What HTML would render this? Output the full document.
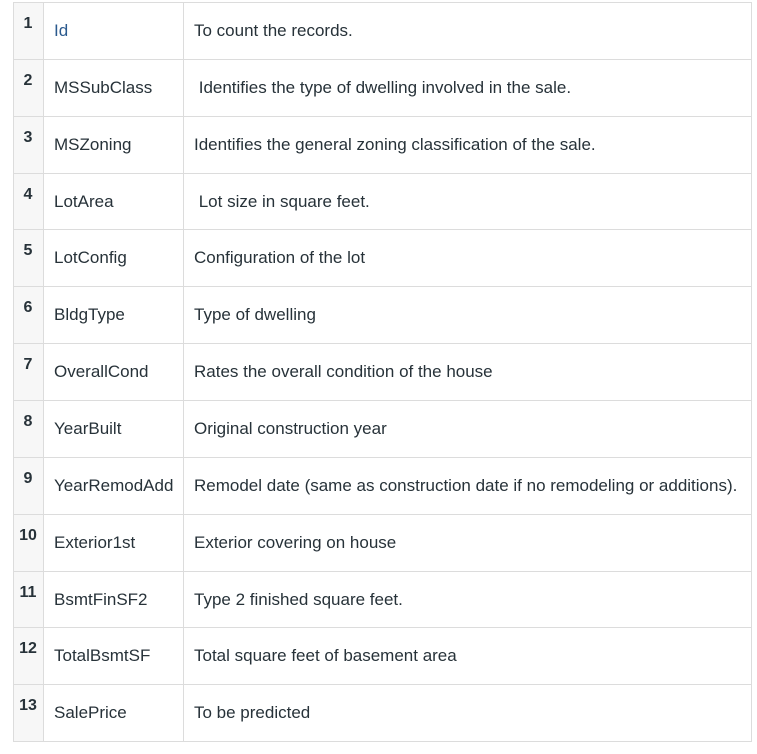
<!DOCTYPE html>
<html><head><meta charset="utf-8"><style>
body{margin:0;background:#fff;width:757px;height:754px;position:relative;font-family:"Liberation Sans",sans-serif;color:#273239;overflow:hidden}
.r{position:absolute;left:13px;width:738px;border-top:1px solid #dcdcdc}
.n{position:absolute;left:13px;width:30px;background:#f7f7f7}
.v{position:absolute;top:2px;width:1px;height:740px;background:#dcdcdc}
.t{position:absolute;font-size:17px;white-space:nowrap;line-height:18px}
.b{position:absolute;font-size:16px;font-weight:bold;line-height:18px;text-align:center;width:30px;left:13px}
</style></head><body>
<div id="g"></div>
<script>
const rows=[["Id","To count the records."],["MSSubClass"," Identifies the type of dwelling involved in the sale."],["MSZoning","Identifies the general zoning classification of the sale."],["LotArea"," Lot size in square feet."],["LotConfig","Configuration of the lot"],["BldgType","Type of dwelling"],["OverallCond","Rates the overall condition of the house"],["YearBuilt","Original construction year"],["YearRemodAdd","Remodel date (same as construction date if no remodeling or additions)."],["Exterior1st","Exterior covering on house"],["BsmtFinSF2","Type 2 finished square feet."],["TotalBsmtSF","Total square feet of basement area"],["SalePrice","To be predicted"]];
let h='<div class="n" style="top:2px;height:740px"></div>';
rows.forEach((r,i)=>{const t=Math.round(2+i*56.85);
h+=`<div class="r" style="top:${t}px"></div><div class="b" style="top:${t+13}px">${i+1}</div><div class="t" style="left:54px;top:${t+20}px;${i==0?'color:#2b5a8e':''}">${r[0]}</div><div class="t" style="left:194px;top:${t+20}px;white-space:pre">${r[1]}</div>`;});
h+='<div class="r" style="top:741px"></div><div class="v" style="left:13px"></div><div class="v" style="left:43px"></div><div class="v" style="left:183px"></div><div class="v" style="left:751px"></div>';
document.getElementById('g').innerHTML=h;
</script>
</body></html>
